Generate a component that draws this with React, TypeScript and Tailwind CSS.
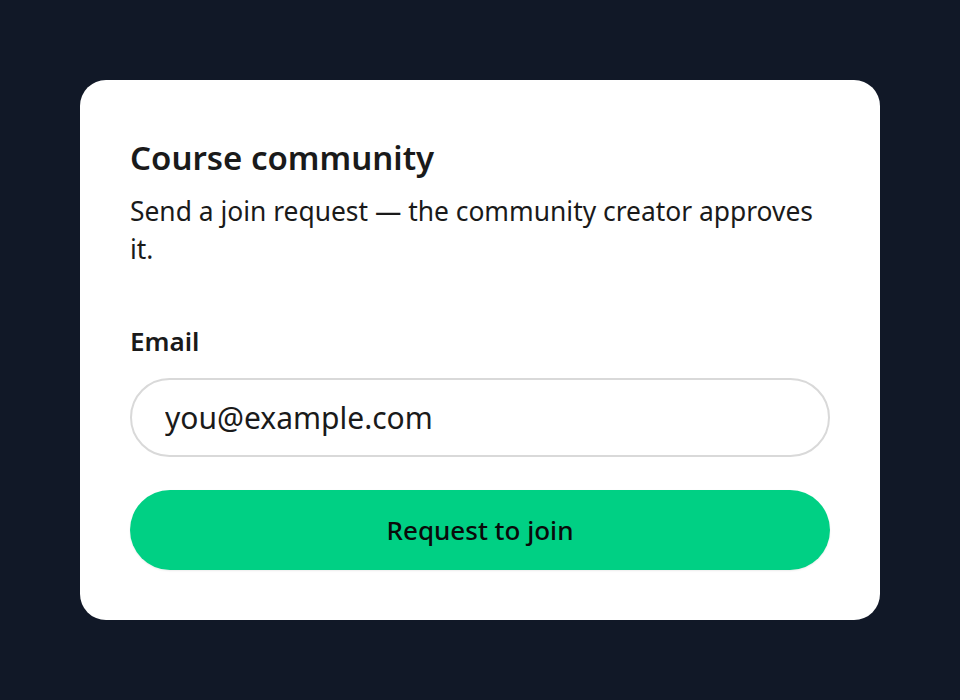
import React, { useState } from 'react';

export default function App() {
  const [email, setEmail] = useState('');

  return (
    <div className="min-h-[700px] w-full bg-[#111827] flex items-start justify-center pt-[80px] font-['Noto_Sans',sans-serif]">
      <div className="w-[800px] h-[540px] bg-white rounded-[26px] px-[50px] pt-[50px] pb-[50px] flex flex-col">
        <h2 className="text-[33px] leading-[56px] font-semibold text-[#1a1a1a]">Course community</h2>
        <p className="text-[26.4px] leading-[38px] text-[#1a1a1a] mt-[6px]">
          Send a join request — the community creator approves it.
        </p>

        <label className="block text-[26px] leading-[39px] font-semibold text-[#1a1a1a] mt-[54px]">Email</label>
        <input
          type="email"
          value={email}
          onChange={(e) => setEmail(e.target.value)}
          placeholder="you@example.com"
          className="mt-[17px] w-full h-[79px] rounded-full border-2 border-[#d9d9d9] px-[33px] text-[30px] text-[#1a1a1a] placeholder:text-[#1a1a1a] outline-none"
        />

        <button
          type="button"
          className="mt-[33px] w-full h-[80px] rounded-full bg-[#00d084] text-[26px] font-medium text-[#0a0a0a] shadow-[0_1px_2px_rgba(0,0,0,0.08)]"
        >
          Request to join
        </button>
      </div>
    </div>
  );
}
